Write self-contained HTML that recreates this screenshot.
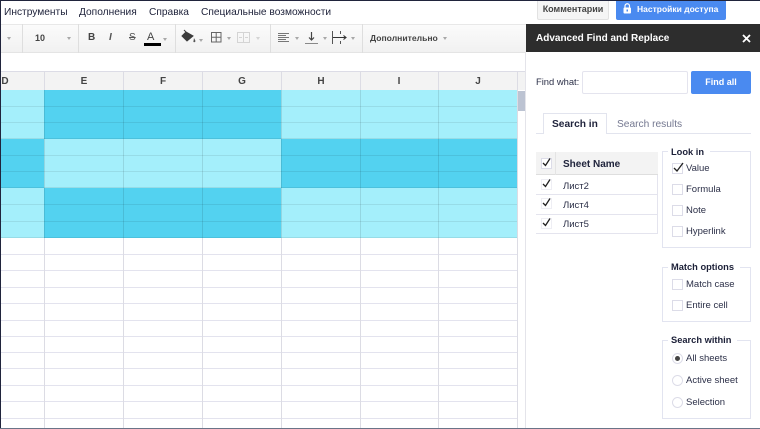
<!DOCTYPE html>
<html><head><meta charset="utf-8">
<style>
*{box-sizing:border-box}
html,body{margin:0;padding:0;width:760px;height:429px;overflow:hidden;background:#fff;font-family:"Liberation Sans","Noto Sans CJK SC",sans-serif;color:#222}
div{position:absolute}
.t{white-space:nowrap;line-height:14px}
.m{top:6px;font-size:10.2px;color:#20243c}
.h{top:75px;font-size:10px;font-weight:bold;color:#444;width:20px;text-align:center}
.tr{width:0;height:0;border-left:2.5px solid transparent;border-right:2.5px solid transparent;border-top:3px solid #a8a8a8}
.sep{top:24px;width:1px;height:29px;background:#dedede}
.cb{width:11px;height:11px;background:#fff;border:1px solid #dcdce8}
.lab{font-size:9.5px;color:#2c3048}
.fs{border:1px solid #e2e4f0;left:662px;width:89px}
.leg{left:668px;padding-left:3px;padding-right:6px;background:#fff;font-size:9.300px;font-weight:bold;color:#1c2038}
.rd{width:11px;height:11px;border-radius:50%;border:1px solid #dcdce8;background:#fff;left:672px}
</style></head><body>

<!-- menu -->
<div class="t m" style="left:4px">Инструменты</div>
<div class="t m" style="left:79px">Дополнения</div>
<div class="t m" style="left:149px">Справка</div>
<div class="t m" style="left:201px">Специальные возможности</div>

<!-- toolbar -->
<div style="left:0;top:24px;width:526px;height:29px;background:linear-gradient(#fbfbfb,#f1f1f1);border-top:1px solid #e8e8e8;border-bottom:1px solid #e4e4e4"></div>
<div class="sep" style="left:22px"></div>
<div class="sep" style="left:78px"></div>
<div class="sep" style="left:175px"></div>
<div class="sep" style="left:270px"></div>
<div class="sep" style="left:362px"></div>
<div class="tr" style="left:7px;top:37px"></div>
<div class="t" style="left:35px;top:31px;font-size:9px;font-weight:bold;color:#444">10</div>
<div class="tr" style="left:67px;top:37px"></div>
<div class="t" style="left:88px;top:31px;font-size:10px;font-weight:bold;color:#444">B</div>
<div class="t" style="left:109px;top:31px;font-size:10px;font-weight:bold;font-style:italic;color:#555">I</div>
<div class="t" style="left:129px;top:31px;font-size:10px;color:#555;text-decoration:line-through">S</div>
<div class="t" style="left:147px;top:30px;font-size:11px;color:#444">A</div>
<div style="left:144px;top:43px;width:17px;height:3px;background:#000"></div>
<div class="tr" style="left:163px;top:38px"></div>
<svg style="position:absolute;left:181px;top:29px" width="16" height="18" viewBox="0 0 16 18"><path d="M3 1l2 2M5 3L1 7l5 5 6-5z" fill="#3c3c3c" stroke="#3c3c3c"/><path d="M13 9c1 2 2 3 1 4-1 .5-2 0-1.500-1z" fill="#555"/></svg>
<div class="tr" style="left:199px;top:39px"></div>
<svg style="position:absolute;left:211px;top:32px" width="11" height="11" viewBox="0 0 11 11"><path d="M.5.5h9.500v9.500H.5zM5.200.5v9.500M.5 5.200h9.500" fill="none" stroke="#666"/></svg>
<div class="tr" style="left:227px;top:37px"></div>
<svg style="position:absolute;left:237px;top:32px" width="13" height="11" viewBox="0 0 13 11"><path d="M.5.5h12v10H.5zM6.500.5v10M2 5.500h3M8 5.500h3" fill="none" stroke="#d4d4d4"/></svg>
<div class="tr" style="left:256px;top:37px;border-top-color:#d4d4d4"></div>
<svg style="position:absolute;left:278px;top:33px" width="11" height="10" viewBox="0 0 11 10"><path d="M0 .5h11M0 2.500h8M0 4.500h11M0 6.500h8M0 8.500h11" stroke="#777"/></svg>
<div class="tr" style="left:295px;top:37px"></div>
<svg style="position:absolute;left:305px;top:31px" width="13" height="13" viewBox="0 0 13 13"><path d="M6.500 1v8M4 6.500l2.500 2.500L9 6.500" fill="none" stroke="#444" stroke-width="1.200"/><path d="M0 12.500h13" stroke="#888"/></svg>
<div class="tr" style="left:323px;top:37px"></div>
<svg style="position:absolute;left:332px;top:31px" width="16" height="13" viewBox="0 0 16 13"><path d="M.5 0v13M8.500 0v3M8.500 10v3" stroke="#555"/><path d="M1 6.500h13M11.500 4.500l2.500 2-2.500 2" fill="none" stroke="#333" stroke-width="1.100"/></svg>
<div class="tr" style="left:351px;top:37px"></div>
<div class="t" style="left:370px;top:31px;font-size:8.600px;font-weight:bold;color:#444">Дополнительно</div>
<div class="tr" style="left:443px;top:37px"></div>

<!-- header -->
<div style="left:0;top:71px;width:526px;height:19px;background:#f3f3f3;border-top:1px solid #dcdce6"></div>
<div class="t h" style="left:-5px">D</div>
<div class="t h" style="left:74px">E</div>
<div class="t h" style="left:153px">F</div>
<div class="t h" style="left:232px">G</div>
<div class="t h" style="left:311px">H</div>
<div class="t h" style="left:389px">I</div>
<div class="t h" style="left:468px">J</div>

<!-- cells -->
<div style="left:0;top:90px;width:517px;height:148px;background:#a4effb"></div>
<div style="left:44px;top:90px;width:237px;height:49px;background:#53d2f0"></div>
<div style="left:0;top:139px;width:44px;height:49px;background:#53d2f0"></div>
<div style="left:281px;top:139px;width:236px;height:49px;background:#53d2f0"></div>
<div style="left:44px;top:188px;width:237px;height:50px;background:#53d2f0"></div>

<svg style="position:absolute;left:0;top:0" width="526" height="429">
<g stroke="#e3e3ee" stroke-width="1">
<path d="M0 254.500h517M0 270.500h517M0 287.500h517M0 303.500h517M0 320.500h517M0 336.500h517M0 352.500h517M0 368.500h517M0 385.500h517M0 401.500h517M0 418.500h517"/>
</g>
<g stroke="#000" stroke-opacity=".08">
<path d="M0 106.500h517M0 122.500h517M0 155.500h517M0 171.500h517M0 204.500h517M0 221.500h517M0 237.500h517M0 138.500h517M0 187.500h517"/>
</g>
<g stroke="#dcdce4"><path d="M44.500 71v19M123.500 71v19M202.500 71v19M281.500 71v19M360.500 71v19M438.500 71v19M517.500 71v358"/>
<path d="M44.500 238v191M123.500 238v191M202.500 238v191M281.500 238v191M360.500 238v191M438.500 238v191"/></g>
<g stroke="#000" stroke-opacity=".1"><path d="M44.500 90v148M123.500 90v148M202.500 90v148M281.500 90v148M360.500 90v148M438.500 90v148"/></g>
</svg>

<!-- scrollbar -->
<div style="left:518px;top:91px;width:7px;height:20px;background:#bcc3d2"></div>
<div style="left:525px;top:53px;width:1px;height:376px;background:#e4e4ea"></div>

<!-- top buttons -->
<div class="t" style="left:537px;top:0;width:72px;height:20px;background:#f5f5f5;border:1px solid #e2e2e2;border-top:0;border-radius:0 0 2px 2px;font-size:9px;font-weight:bold;color:#444;text-align:center;line-height:18px">Комментарии</div>
<div style="left:616px;top:0;width:110px;height:20px;background:#4a8af0;border-radius:0 0 2px 2px"></div>
<svg style="position:absolute;left:623px;top:3px" width="9" height="11" viewBox="0 0 9 11"><rect x="0.500" y="4.500" width="7.500" height="6" rx="1" fill="#fff"/><path d="M2 5V3a2.200 2.200 0 0 1 4.500 0v2" fill="none" stroke="#fff" stroke-width="1.200"/><rect x="3.500" y="6.500" width="1.500" height="2" fill="#4a8af0"/></svg>
<div class="t" style="left:637px;top:2px;font-size:8.500px;font-weight:bold;color:#fff">Настройки доступа</div>

<!-- sidebar title -->
<div style="left:526px;top:24px;width:234px;height:28px;background:#2d2d2d"></div>
<div class="t" style="left:536px;top:32px;font-size:10px;font-weight:bold;color:#fff">Advanced Find and Replace</div>
<svg style="position:absolute;left:742px;top:34px" width="9" height="9" viewBox="0 0 9 9"><path d="M1 1l7 7M8 1L1 8" stroke="#fff" stroke-width="1.800"/></svg>

<!-- find -->
<div class="t lab" style="left:536px;top:75px;font-size:9.400px">Find what:</div>
<div style="left:582px;top:71px;width:106px;height:23px;background:#fff;border:1px solid #e4e4ee;border-radius:2px"></div>
<div class="t" style="left:691px;top:71px;width:60px;height:23px;background:#4a8af0;border-radius:2px;color:#fff;font-size:9px;font-weight:bold;text-align:center;line-height:23px">Find all</div>

<!-- tabs -->
<div style="left:536px;top:133px;width:215px;height:1px;background:#e2e4ee"></div>
<div style="left:543px;top:113px;width:64px;height:21px;background:#fff;border:1px solid #e2e4ee;border-bottom:0"></div>
<div class="t" style="left:552px;top:118px;font-size:10.200px;font-weight:bold;color:#20243c">Search in</div>
<div class="t" style="left:617px;top:118px;font-size:10.200px;color:#747890">Search results</div>

<!-- sheet table -->
<div style="left:536px;top:152px;width:122px;height:23px;background:#f3f3f3;border-bottom:1px solid #dedede"></div>
<div style="left:555px;top:152px;width:1px;height:23px;background:#e4e4e4"></div>
<div class="t" style="left:563px;top:158px;font-size:10px;font-weight:bold;color:#20243c">Sheet Name</div>
<div style="left:536px;top:194px;width:122px;height:1px;background:#e4e4ee"></div>
<div style="left:536px;top:214px;width:122px;height:1px;background:#e4e4ee"></div>
<div style="left:536px;top:233px;width:122px;height:1px;background:#e4e4ee"></div>
<div style="left:657px;top:175px;width:1px;height:59px;background:#e4e4ee"></div>
<div class="t lab" style="left:563px;top:180px">Лист2</div>
<div class="t lab" style="left:563px;top:199px">Лист4</div>
<div class="t lab" style="left:563px;top:218px">Лист5</div>
<div class="cb" style="left:541px;top:158px"></div>
<div class="cb" style="left:541px;top:179px;border-color:#eeeef4"></div>
<div class="cb" style="left:541px;top:198px;border-color:#eeeef4"></div>
<div class="cb" style="left:541px;top:218px;border-color:#eeeef4"></div>

<!-- look in -->
<div class="fs" style="top:151px;height:97px"></div>
<div class="t leg" style="top:145px">Look in</div>
<div class="cb" style="left:672px;top:163px"></div>
<div class="t lab" style="left:686px;top:162px">Value</div>
<div class="cb" style="left:672px;top:184px"></div>
<div class="t lab" style="left:686px;top:183px">Formula</div>
<div class="cb" style="left:672px;top:205px"></div>
<div class="t lab" style="left:686px;top:204px">Note</div>
<div class="cb" style="left:672px;top:226px"></div>
<div class="t lab" style="left:686px;top:225px">Hyperlink</div>

<!-- match options -->
<div class="fs" style="top:267px;height:55px"></div>
<div class="t leg" style="top:260px">Match options</div>
<div class="cb" style="left:672px;top:279px"></div>
<div class="t lab" style="left:686px;top:278px">Match case</div>
<div class="cb" style="left:672px;top:300px"></div>
<div class="t lab" style="left:686px;top:299px">Entire cell</div>

<!-- search within -->
<div class="fs" style="top:340px;height:79px"></div>
<div class="t leg" style="top:333px">Search within</div>
<div class="rd" style="top:353px"></div>
<div style="left:675px;top:356px;width:5px;height:5px;border-radius:50%;background:#444"></div>
<div class="t lab" style="left:686px;top:352px">All sheets</div>
<div class="rd" style="top:375px"></div>
<div class="t lab" style="left:686px;top:374px">Active sheet</div>
<div class="rd" style="top:397px"></div>
<div class="t lab" style="left:686px;top:396px">Selection</div>

<svg style="position:absolute;left:0;top:0" width="760" height="429"><g fill="none" stroke="#222" stroke-width="1.300">
<path d="M543 163l2.500 2.500 4.500-7M543 184l2.500 2.500 4.500-7M543 203l2.500 2.500 4.500-7M543 223l2.500 2.500 4.500-7M674 168l3 3 6-8"/></g></svg>

<!-- frame -->
<div style="left:0;top:0;width:760px;height:1px;background:#20243c"></div>
<div style="left:0;top:0;width:1px;height:429px;background:#20243c"></div>
<div style="left:0;top:428px;width:760px;height:1px;background:#6a7488"></div>
</body></html>
